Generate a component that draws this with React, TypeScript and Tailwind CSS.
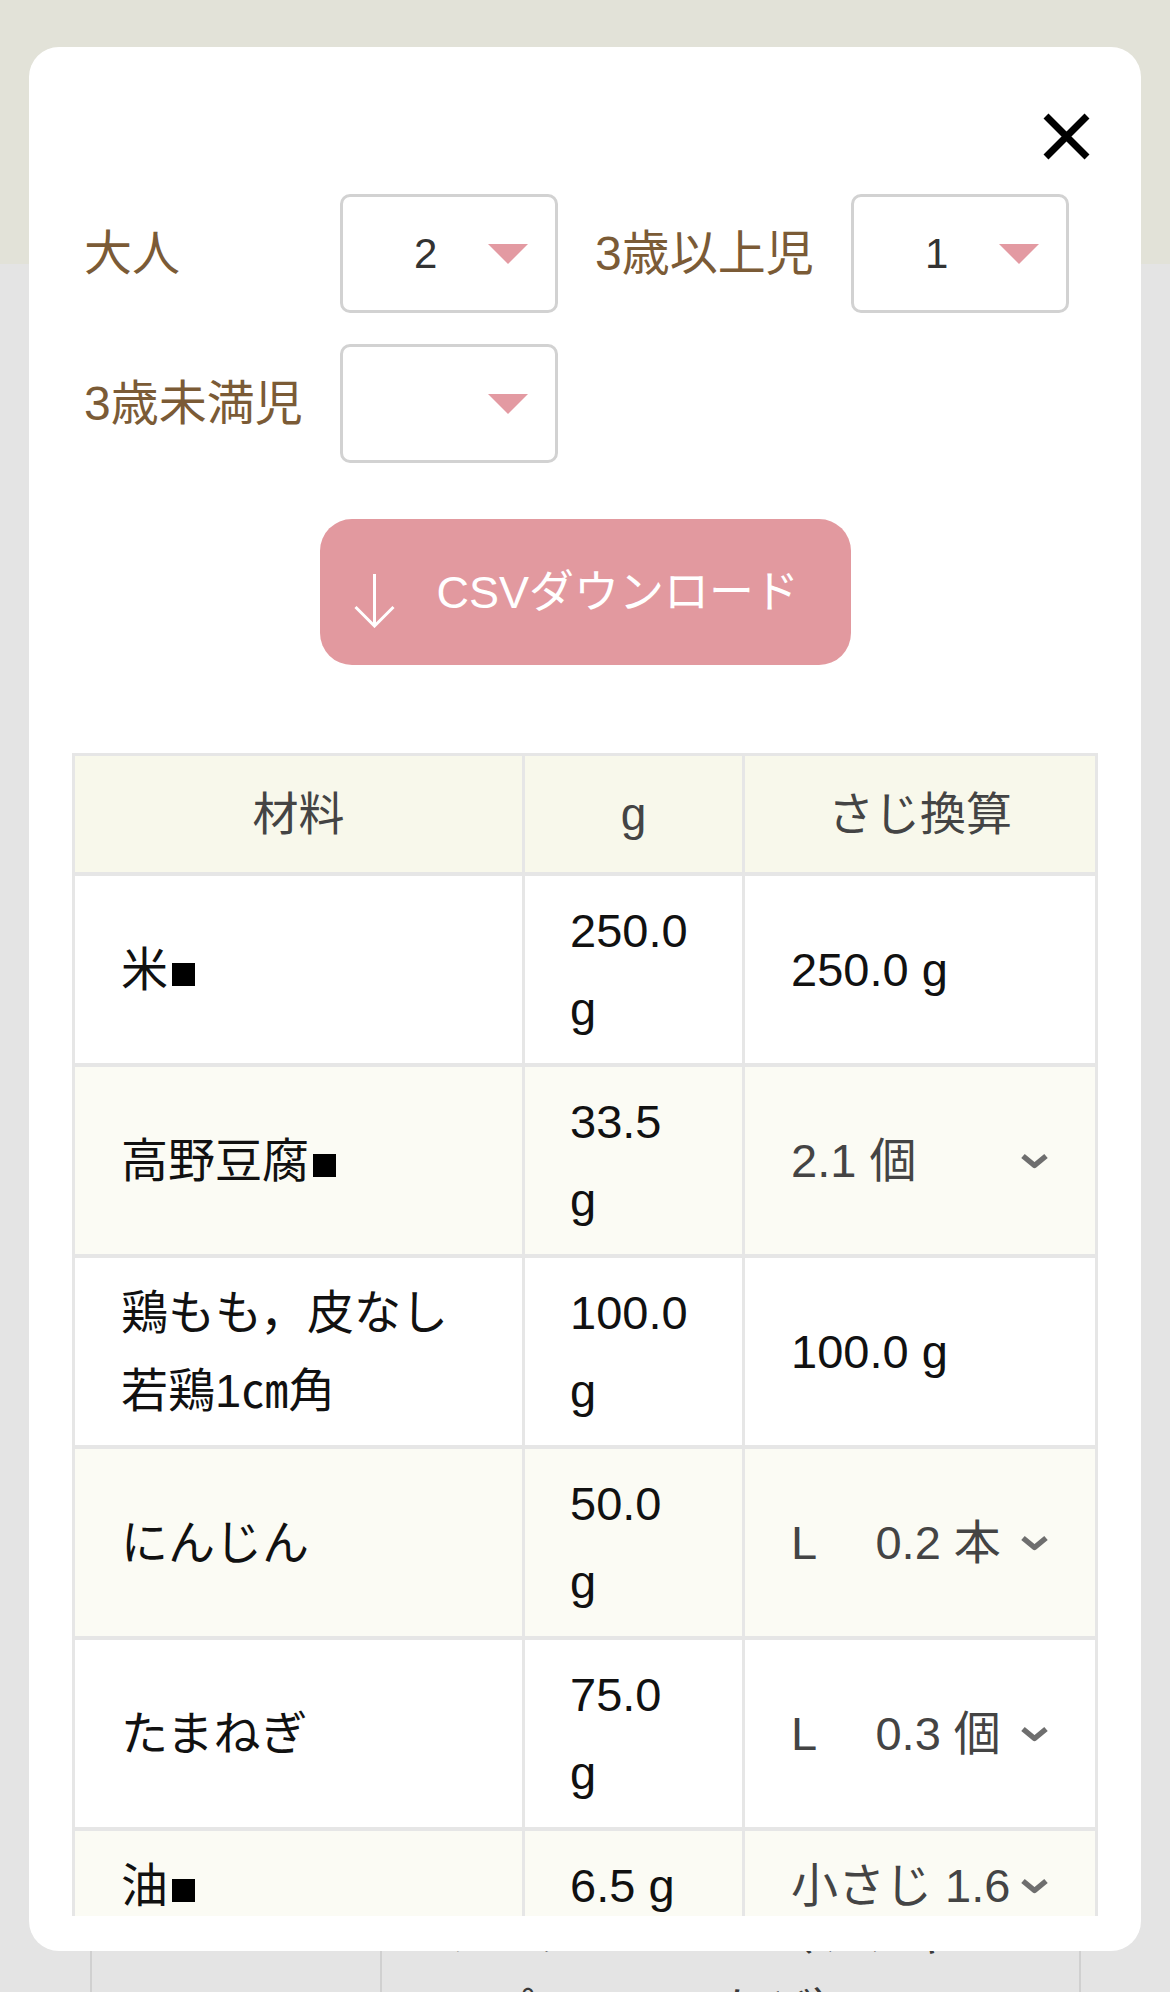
import React from "react";

const ROWS = [
  { name: "米", mark: true, grams: "250.0 g", conv: "250.0 g", select: false },
  { name: "高野豆腐", mark: true, grams: "33.5 g", conv: "2.1 個", select: true },
  { name: "鶏もも，皮なし", name2: "若鶏1㎝角", grams: "100.0 g", conv: "100.0 g", select: false },
  { name: "にんじん", grams: "50.0 g", conv: "L　 0.2 本", select: true },
  { name: "たまねぎ", grams: "75.0 g", conv: "L　 0.3 個", select: true },
  { name: "油", mark: true, grams: "6.5 g", conv: "小さじ 1.6 杯", select: true },
];

function Triangle() {
  return (
    <svg width="40" height="20" viewBox="0 0 40 20" className="shrink-0">
      <polygon points="0,0 40,0 20,20" fill="#e39aa2" />
    </svg>
  );
}

function Chevron() {
  return (
    <svg width="29" height="16" viewBox="0 0 29 16" className="shrink-0">
      <polyline points="3,3 14.5,12.5 26,3" fill="none" stroke="#6e6e6e" strokeWidth="5.5" strokeLinejoin="round" />
    </svg>
  );
}

function CountSelect({ value }: { value: string }) {
  return (
    <div className="flex h-[119px] w-[218px] items-center rounded-[10px] border-[3px] border-[#d2d2d2] bg-white pl-[71px]">
      <span className="w-[74px] text-[42px] leading-none text-[#333]">{value}</span>
      <Triangle />
    </div>
  );
}

function Field({ label, value }: { label: string; value: string }) {
  return (
    <div className="flex items-center">
      <span className="w-[256px] text-[48px] leading-none text-[#7b5b36]">{label}</span>
      <CountSelect value={value} />
    </div>
  );
}

export default function App() {
  return (
    <div className="relative flex h-[1992px] w-[1170px] flex-col overflow-hidden bg-[#e4e4e4] font-['Liberation_Sans','Noto_Sans_CJK_JP',sans-serif]">
      {/* page underneath the dialog */}
      <div className="h-[264px] shrink-0 bg-[#e2e2d8]" />
      <div className="pt-[1616px]">
        <div className="ml-[90px] grid w-[991px] grid-cols-[288px_1fr] border-x-2 border-[#d0d0d0]">
          <div />
          <div className="border-l-2 border-[#d0d0d0] pt-[14px] pl-[58px] text-[47px] leading-[78px] text-[#3a3a3a]">
            <div>ウスターソース（ケチャ</div>
            <div>ップ、ソースなど）</div>
          </div>
        </div>
      </div>

      {/* dialog */}
      <div className="absolute top-[47px] left-[29px] flex h-[1904px] w-[1112px] flex-col rounded-[30px] bg-white px-[43px] pb-[35px]">
        <div className="min-h-0 flex-1 overflow-hidden">
          <div className="mt-[66px] flex justify-end pr-[8px]">
            <svg width="47" height="47" viewBox="0 0 47 47">
              <path d="M3 3 L44 44 M44 3 L3 44" stroke="#000" strokeWidth="7" />
            </svg>
          </div>

          <div className="mt-[34px] ml-[12px] flex w-[985px] flex-wrap gap-x-[37px] gap-y-[31px]">
            <Field label="大人" value="2" />
            <Field label="3歳以上児" value="1" />
            <Field label="3歳未満児" value="" />
          </div>

          <button className="mx-auto mt-[56px] flex h-[146px] w-[531px] items-center rounded-[32px] bg-[#e2999f] pl-[34px]">
            <svg width="41" height="55" viewBox="0 0 41 55" className="mt-[16px] shrink-0">
              <path d="M20.5 1 L20.5 53 M1.5 34 L20.5 53 L39.5 34" fill="none" stroke="#fff" strokeWidth="3" />
            </svg>
            <span className="ml-[42px] text-[45px] leading-none text-white">CSVダウンロード</span>
          </button>

          <div className="mt-[88px] w-[1026px] border-[3px] border-[#e6e6e6] text-[47px]">
            <div className="grid h-[116px] grid-cols-[447px_220px_353px] bg-[#f8f8eb] text-[46px] text-[#444]">
              <div className="flex items-center justify-center">材料</div>
              <div className="flex items-center justify-center border-l-[3px] border-[#e6e6e6]">g</div>
              <div className="flex items-center justify-center border-l-[3px] border-[#e6e6e6]">さじ換算</div>
            </div>
            {ROWS.map((r, i) => (
              <div
                key={r.name}
                className={`grid grid-cols-[447px_220px_353px] border-t-4 border-[#e6e6e6] leading-[78px] text-[#111] ${
                  i % 2 === 1 ? "bg-[#fbfbf4]" : "bg-white"
                }`}
              >
                <div className="flex items-center pt-[16px] pr-[46px] pb-[15px] pl-[46px]">
                  <div>
                    {r.name}
                    {r.mark && <span className="ml-[4px] inline-block h-[23px] w-[23px] bg-black" />}
                    {r.name2 && (
                      <>
                        <br />
                        {r.name2}
                      </>
                    )}
                  </div>
                </div>
                <div className="flex items-center border-l-[3px] border-[#e6e6e6] pt-[16px] pr-[45px] pb-[15px] pl-[45px]">
                  <div>{r.grams}</div>
                </div>
                <div className="flex items-center border-l-[3px] border-[#e6e6e6] pt-[16px] pr-[46px] pb-[15px] pl-[46px]">
                  {r.select ? (
                    <div className="flex w-full items-center text-[#444]">
                      <span className="min-w-0 flex-1 overflow-hidden whitespace-nowrap">{r.conv}</span>
                      <Chevron />
                    </div>
                  ) : (
                    <div>{r.conv}</div>
                  )}
                </div>
              </div>
            ))}
          </div>
        </div>
      </div>
    </div>
  );
}
